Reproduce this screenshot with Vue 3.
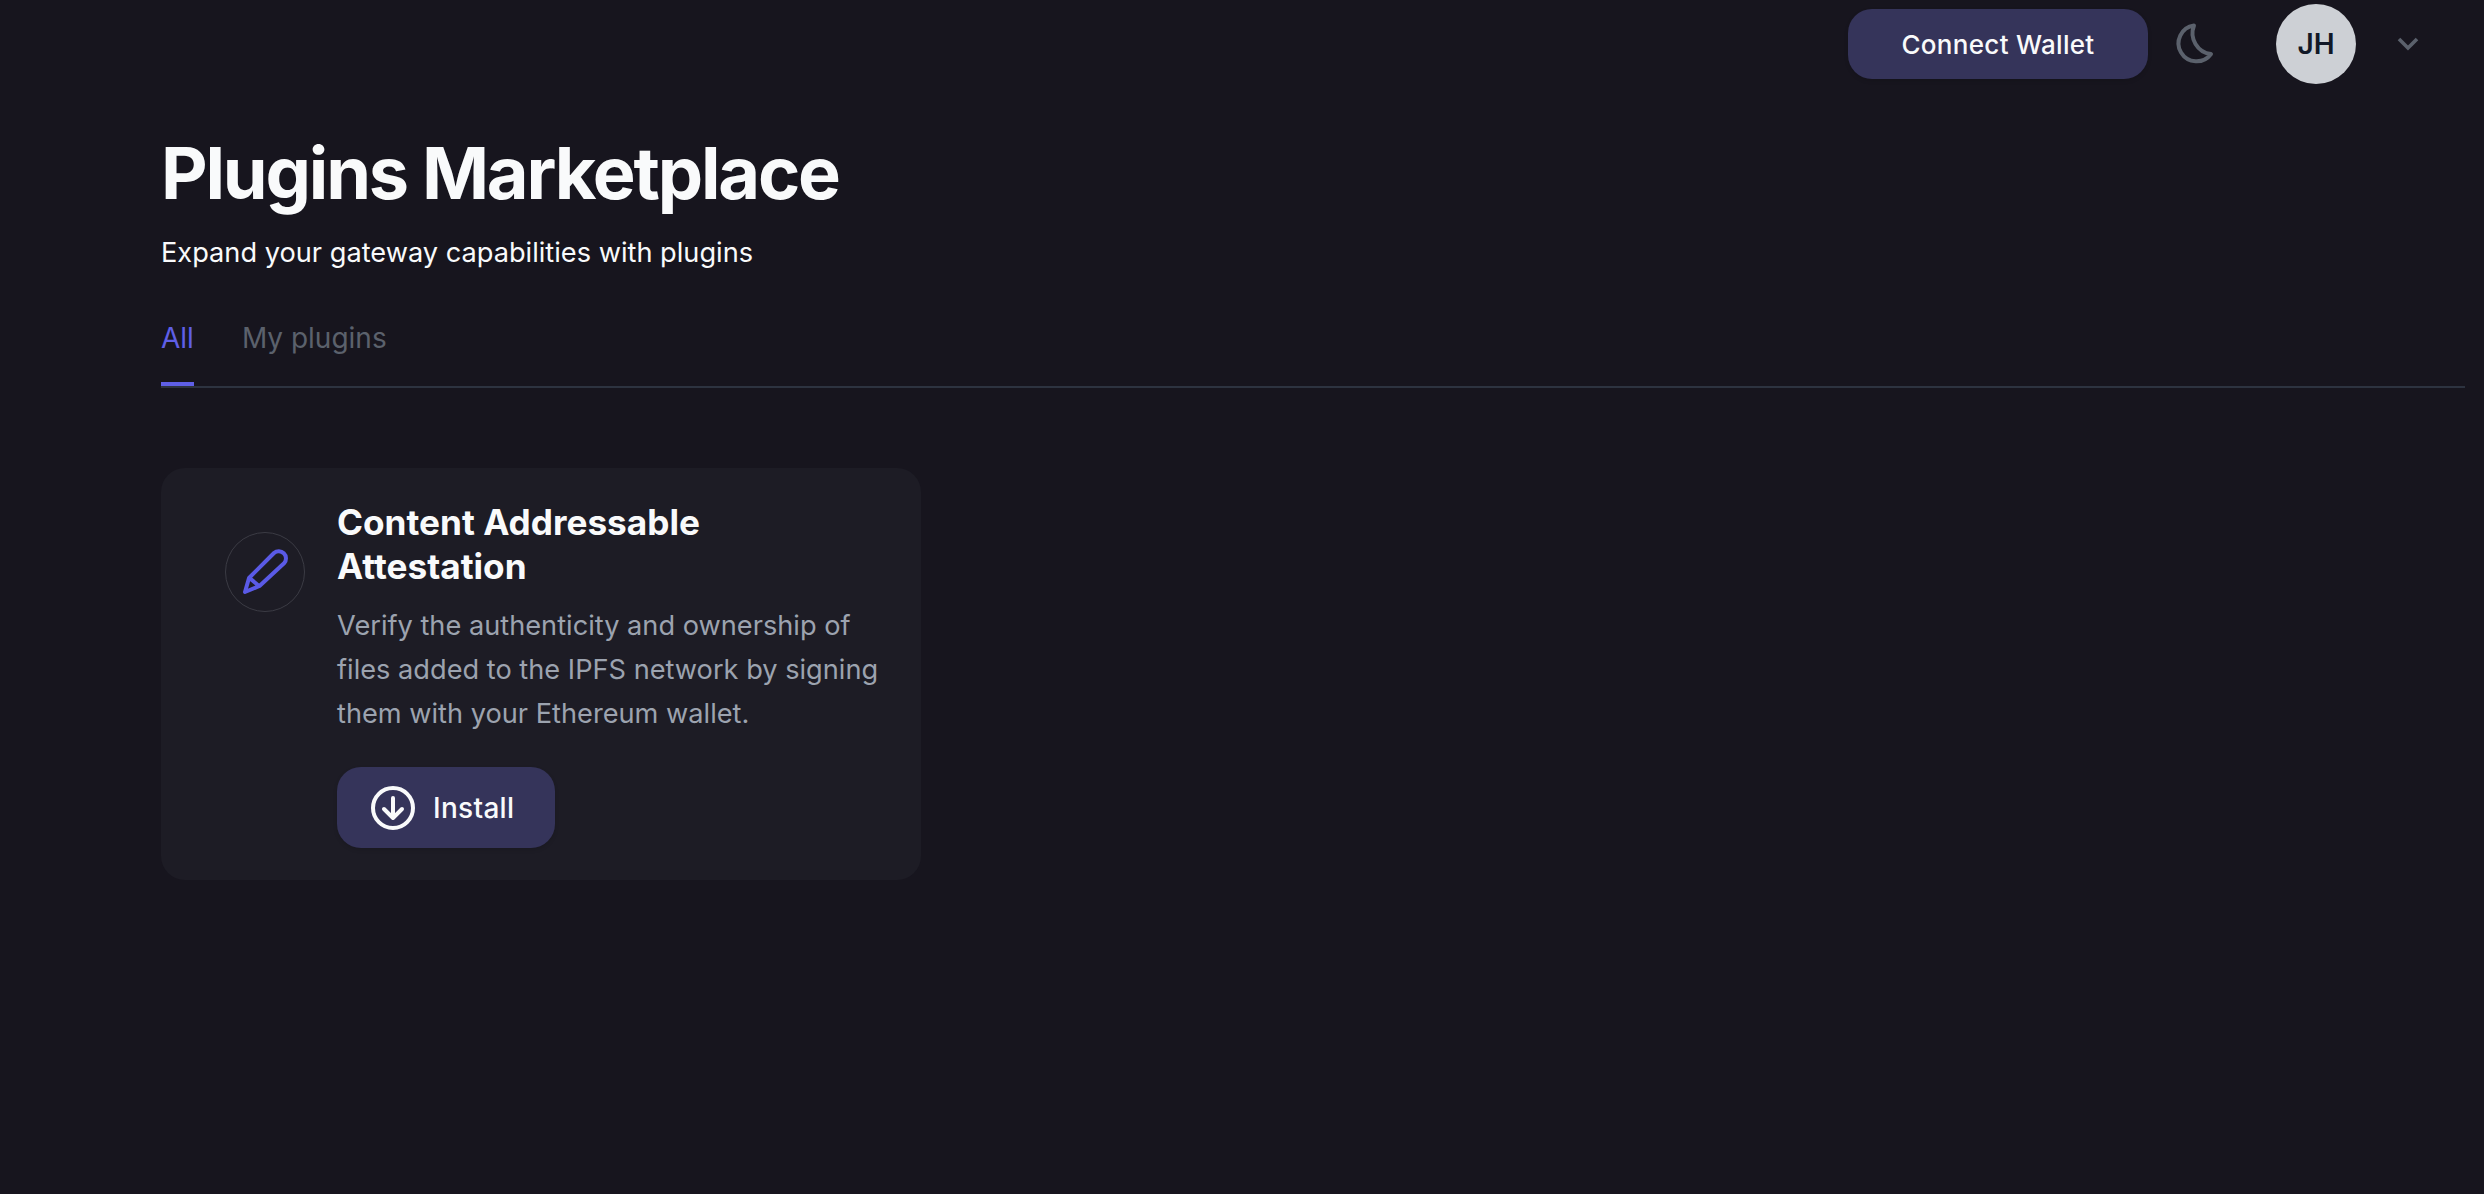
<script setup>
const tabs = [
  { label: 'All', active: true },
  { label: 'My plugins', active: false }
]
</script>

<template>
  <div class="page">
    <header class="topbar">
      <button class="btn connect" type="button">Connect Wallet</button>
      <svg class="moon" width="44" height="44" viewBox="0 0 44 44" fill="none" aria-hidden="true">
        <path d="M24 3.5A18 18 0 1 0 41 32A21 21 0 0 1 24 3.5Z" />
      </svg>
      <div class="avatar">JH</div>
      <svg class="chevron" width="28" height="20" viewBox="0 0 28 20" fill="none" aria-hidden="true">
        <path d="M5 5l9 9 9-9" />
      </svg>
    </header>

    <main class="content">
      <h1>Plugins Marketplace</h1>
      <p class="subtitle">Expand your gateway capabilities with plugins</p>

      <nav class="tabs">
        <a v-for="tab in tabs" :key="tab.label" class="tab" :class="{ active: tab.active }">{{ tab.label }}</a>
      </nav>

      <article class="card">
        <div class="card-icon">
          <svg width="78" height="78" viewBox="1 1 78 78" fill="none" aria-hidden="true">
            <path d="M20 60L24 46L49 21A7.2 7.2 0 0 1 59.3 31L34.5 54ZM24.5 46L34 54" />
          </svg>
        </div>
        <div class="card-body">
          <h2>Content Addressable Attestation</h2>
          <p>Verify the authenticity and ownership of files added to the IPFS network by signing them with your Ethereum wallet.</p>
          <button class="btn install" type="button">
            <svg width="44" height="44" viewBox="0 0 44 44" fill="none" aria-hidden="true">
              <circle cx="22" cy="22" r="20" />
              <path d="M22 12v20M13 23l9 9 9-9" />
            </svg>
            Install
          </button>
        </div>
      </article>
    </main>
  </div>
</template>

<style>
html,
body {
  margin: 0;
  background: #17151e;
}
</style>

<style scoped>
.page {
  min-height: 100vh;
  box-sizing: border-box;
  background: #17151e;
  color: #f9fafb;
  font-family: Inter, "Noto Sans", sans-serif;
}

.topbar {
  display: flex;
  align-items: center;
  justify-content: flex-end;
  height: 88px;
  padding-right: 62px;
}

.btn {
  border: 0;
  background: #35345a;
  color: #f9fafb;
  font-family: inherit;
  font-weight: 500;
  letter-spacing: 0.3px;
  box-shadow: 0 2px 4px rgba(0, 0, 0, 0.12);
}

.connect {
  width: 300px;
  height: 70px;
  border-radius: 24px;
  font-size: 26px;
}

.moon {
  margin-left: 22px;
}

.moon path {
  stroke: #5b616c;
  stroke-width: 4;
  stroke-linejoin: round;
}

.avatar {
  display: flex;
  align-items: center;
  justify-content: center;
  width: 80px;
  height: 80px;
  margin-left: 62px;
  border-radius: 50%;
  background: #cdd0d5;
  color: #111827;
  font-size: 28px;
  font-weight: 600;
}

.chevron {
  margin-left: 38px;
}

.chevron path {
  stroke: #5b616c;
  stroke-width: 3.6;
}

.content {
  padding: 45px 19px 0 161px;
}

h1 {
  margin: 0;
  font-size: 72px;
  line-height: 80px;
  font-weight: 700;
  letter-spacing: -0.03em;
}

.subtitle {
  margin: 20px 0 0;
  font-size: 27.2px;
  line-height: 40px;
}

.tabs {
  display: flex;
  gap: 48px;
  margin-top: 33px;
  border-bottom: 2px solid #2d3340;
}

.tab {
  height: 80px;
  box-sizing: border-box;
  padding-top: 12px;
  border-bottom: 4px solid transparent;
  color: #5b616c;
  font-size: 28px;
  line-height: 40px;
}

.tab.active {
  border-bottom-color: #5f5fe6;
  color: #5f5fe6;
}

.card {
  display: flex;
  gap: 32px;
  width: 760px;
  height: 412px;
  box-sizing: border-box;
  margin-top: 80px;
  padding: 32px 32px 32px 64px;
  border-radius: 24px;
  background: #1d1c25;
}

.card-icon {
  display: flex;
  align-items: center;
  justify-content: center;
  flex: 0 0 auto;
  width: 80px;
  height: 80px;
  box-sizing: border-box;
  margin-top: 32px;
  border: 1px solid #3b3b44;
  border-radius: 50%;
}

.card-icon path {
  stroke: #5a5ae6;
  stroke-width: 4;
  stroke-linejoin: round;
  stroke-linecap: round;
}

.card-body {
  min-width: 0;
}

h2 {
  margin: 0;
  font-size: 35.2px;
  line-height: 44px;
  font-weight: 700;
}

.card-body p {
  margin: 16px 0 0;
  color: #9ca3af;
  font-size: 27.2px;
  line-height: 44px;
}

.install {
  display: flex;
  align-items: center;
  gap: 18px;
  width: 218px;
  height: 81px;
  margin-top: 31px;
  padding: 0 0 0 34px;
  border-radius: 24px;
  font-size: 28px;
}

.install circle,
.install path {
  stroke: #f9fafb;
  stroke-width: 4;
  stroke-linecap: round;
  stroke-linejoin: round;
}
</style>
